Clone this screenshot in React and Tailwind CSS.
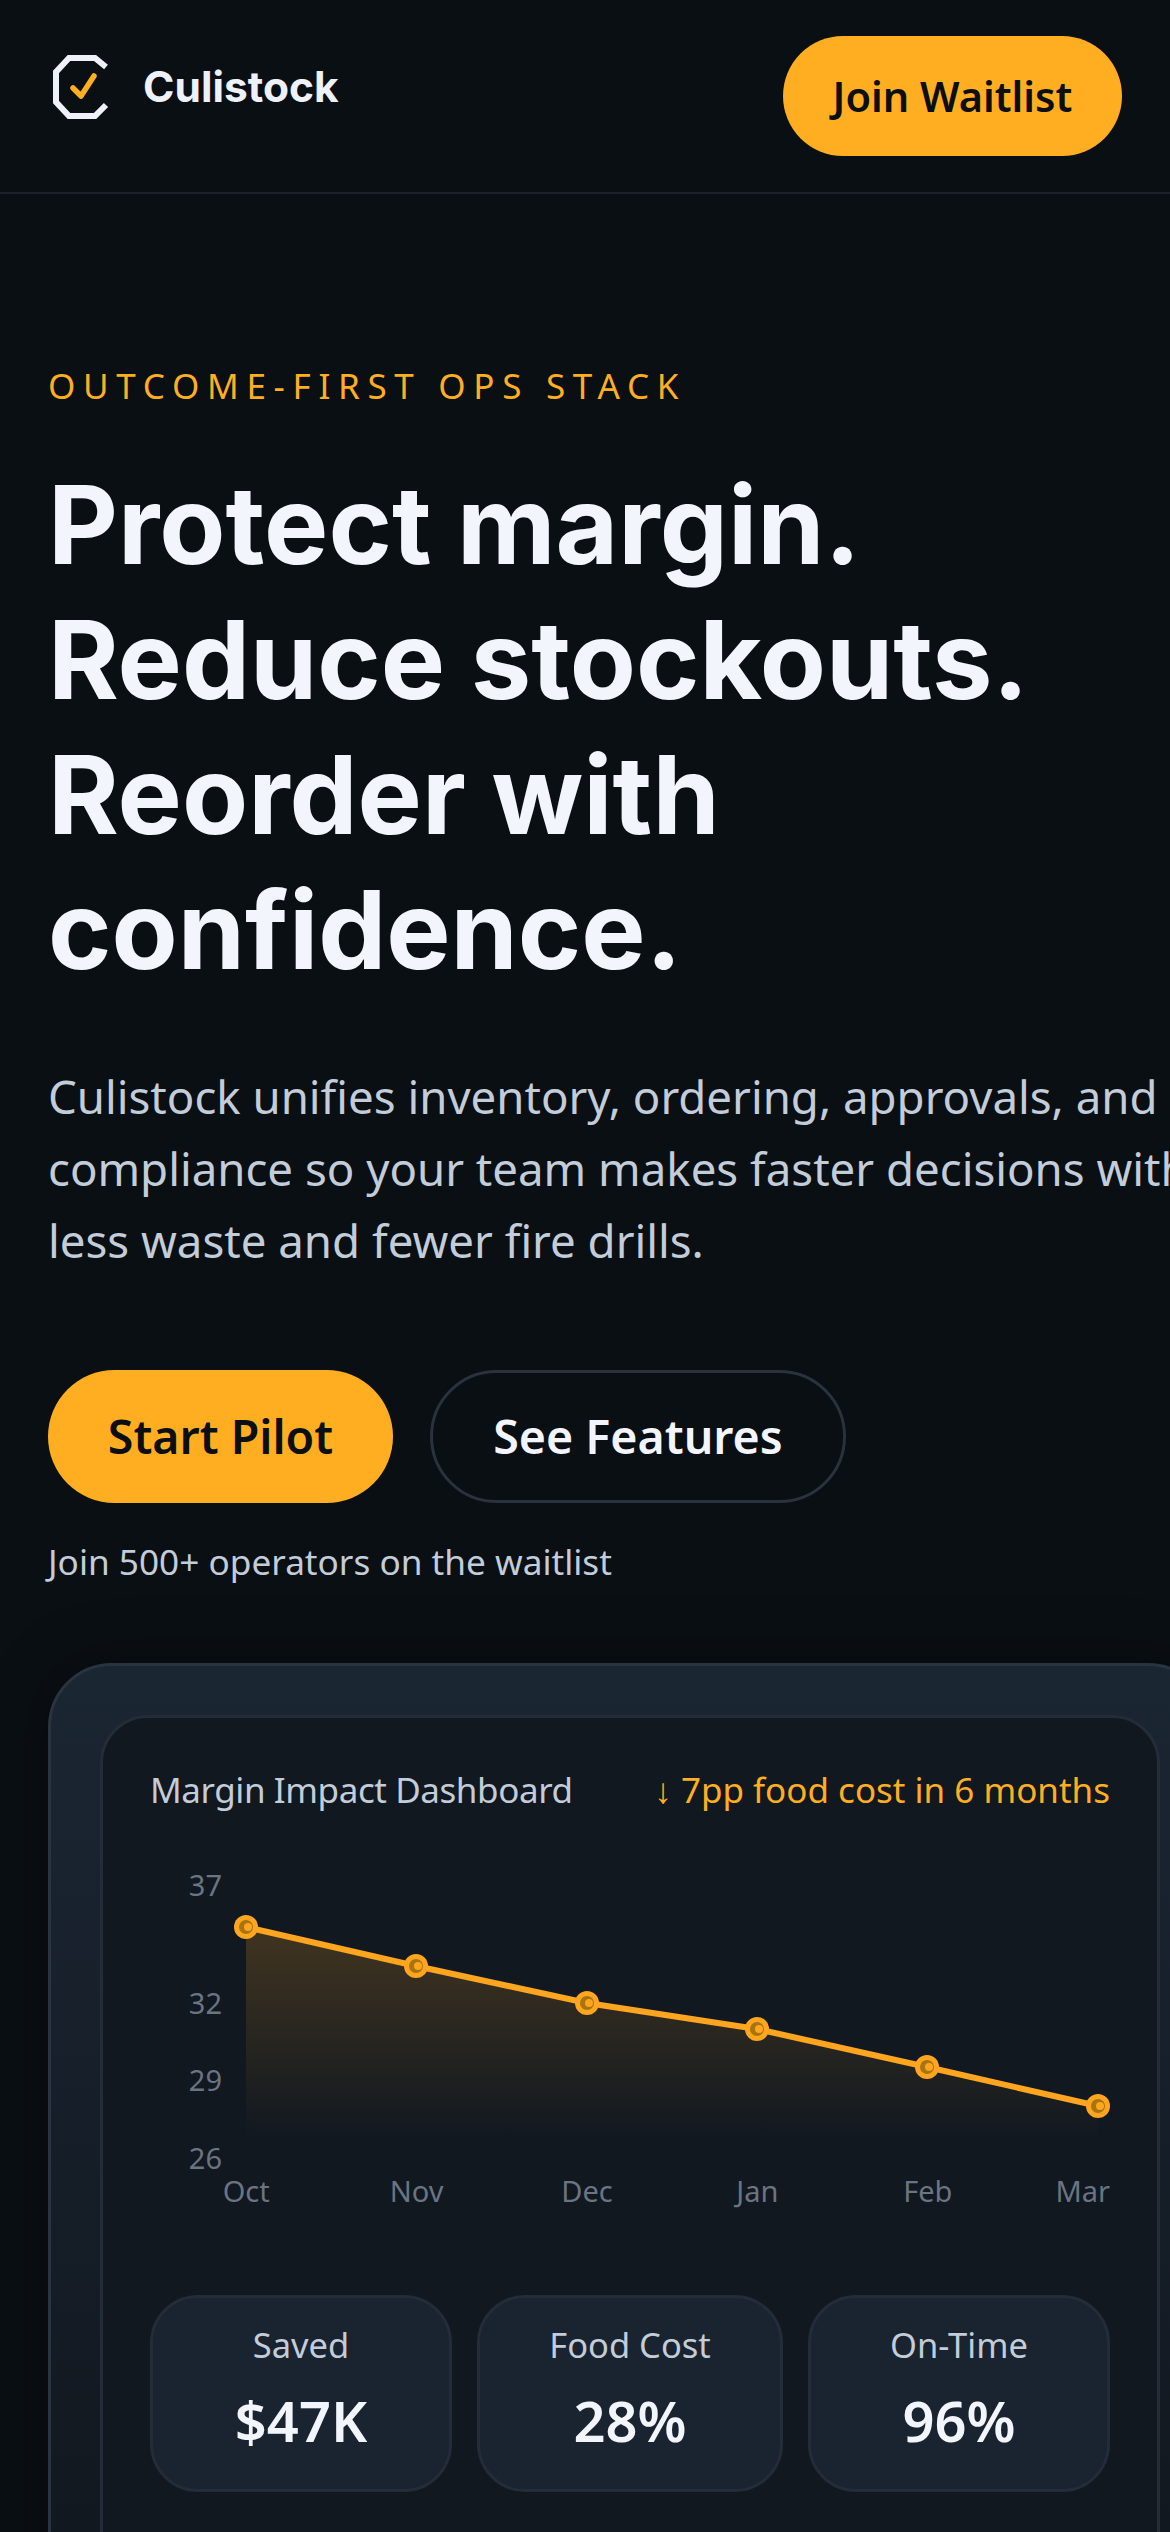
const months = ['Oct', 'Nov', 'Dec', 'Jan', 'Feb'];
const points = [[246, 96], [416, 135], [587, 172], [757, 198], [927, 236], [1098, 275]];
const stats = [
  { label: 'Saved', value: '$47K', width: 'w-[302px]' },
  { label: 'Food Cost', value: '28%', width: 'w-[306px]' },
  { label: 'On-Time', value: '96%', width: 'w-[302px]' },
];

function Logo() {
  return (
    <svg width="64" height="68" viewBox="0 0 64 68" fill="none" className="shrink-0">
      <path d="M58 14 L47 5 L21 5 L8 19 L8 49 L21 63 L47 63 L58 52" stroke="#eef2f8" strokeWidth="6" />
      <path d="M25 35 L33 43 L46 23" stroke="#ffae21" strokeWidth="5.5" strokeLinecap="round" strokeLinejoin="round" />
    </svg>
  );
}

function Chart() {
  const line = points.map((p) => p.join(',')).join(' ');
  return (
    <svg width="1060" height="346" viewBox="100 0 1060 346" className="mt-[16px] block">
      <defs>
        <linearGradient id="areaFill" gradientUnits="userSpaceOnUse" x1="0" y1="96" x2="0" y2="310">
          <stop offset="0%" stopColor="#ffa51f" stopOpacity="0.2" />
          <stop offset="100%" stopColor="#ffa51f" stopOpacity="0" />
        </linearGradient>
      </defs>
      {[['37', 54], ['32', 172], ['29', 249], ['26', 327]].map(([label, y]) => (
        <text key={label} x="222" y={y + 11} textAnchor="end" fontSize="29" fill="#6b7482" fontFamily="'Noto Sans', sans-serif">{label}</text>
      ))}
      <polygon points={`246,96 ${line} 1098,310 246,310`} fill="url(#areaFill)" />
      <polyline points={line} fill="none" stroke="#ffa51f" strokeWidth="6" />
      {points.map(([x, y]) => (
        <g key={x}>
          <circle cx={x} cy={y} r="12" fill="#ffa51f" />
          <circle cx={x} cy={y} r="7" fill="#a8740f" />
          <circle cx={x + 2} cy={y} r="4" fill="#ffa51f" />
        </g>
      ))}
    </svg>
  );
}

export default function App() {
  return (
    <div className="h-[2532px] w-[1170px] overflow-hidden bg-[#0a0f14] font-['Noto_Sans',sans-serif] text-white">
      <div className="w-[1260px]">
        <header className="flex h-[194px] w-[1170px] items-start justify-between border-b-2 border-[#1b2129] pl-[48px] pr-[48px] pt-[36px]">
          <div className="mt-[17px] flex items-center gap-[31px]">
            <Logo />
            <span className="font-['Inter',sans-serif] text-[42.5px] font-bold leading-[52px] text-[#eef2f8]">Culistock</span>
          </div>
          <button className="h-[120px] w-[339px] rounded-full bg-[#ffae21] text-[41.5px] font-semibold text-[#0b0f14]">Join Waitlist</button>
        </header>

        <main className="px-[48px]">
          <p className="mt-[170px] text-[35px] leading-[44px] tracking-[0.22em] text-[#ffae21]">OUTCOME-FIRST OPS STACK</p>
          <h1 className="mt-[49px] font-['Inter',sans-serif] text-[108px] font-bold leading-[135px] text-[#f2f5fb]">
            Protect margin.<br />Reduce stockouts.<br />Reorder with<br />confidence.
          </h1>
          <p className="mt-[63px] text-[45.6px] leading-[72px] text-[#c3ccd9]">
            Culistock unifies inventory, ordering, approvals, and compliance so your team makes faster decisions with less waste and fewer fire drills.
          </p>
          <div className="mt-[94px] flex gap-[37px]">
            <button className="h-[133px] w-[345px] rounded-full bg-[#ffae21] text-[46.5px] font-semibold text-[#0b0f14]">Start Pilot</button>
            <button className="h-[133px] w-[416px] rounded-full border-[3px] border-[#2a323d] text-[46.5px] font-semibold text-[#f2f5fb]">See Features</button>
          </div>
          <p className="mt-[36px] text-[35.2px] leading-[44px] text-[#c3ccd9]">Join 500+ operators on the waitlist</p>

          <section className="mt-[80px] h-[1000px] rounded-[64px] border-[3px] border-[#2a3441] bg-gradient-to-b from-[#1b2633] to-[#10161d] pl-[49px] pt-[49px] shadow-[0_0_60px_rgba(0,0,0,0.35)]">
            <div className="h-[900px] w-[1060px] rounded-[48px] border-[3px] border-[#232c38] bg-[#111820] px-[47px] pt-[47px]">
              <div className="flex items-center justify-between text-[35px] leading-[50px]">
                <span className="tracking-[-0.012em] text-[#c3ccd9]">Margin Impact Dashboard</span>
                <span className="text-[#ffae21]">↓ 7pp food cost in 6 months</span>
              </div>
              <div className="-mx-[50px]">
                <Chart />
              </div>
              <div className="-mt-[6px] flex pl-[11px] text-[29px] leading-[40px] text-[#6b7482]">
                {months.map((m) => <span key={m} className="w-[170.4px] text-center">{m}</span>)}
                <span className="flex-1 text-right">Mar</span>
              </div>
              <div className="mt-[84px] flex justify-between">
                {stats.map((s) => (
                  <div key={s.label} className={`${s.width} h-[197px] rounded-[48px] border-[3px] border-[#232c38] bg-[#1a2430] pt-[24px] text-center`}>
                    <p className="text-[34.5px] leading-[46px] text-[#c3ccd9]">{s.label}</p>
                    <p className="mt-[18px] text-[56px] font-semibold leading-[68px] text-[#f2f5fb]">{s.value}</p>
                  </div>
                ))}
              </div>
            </div>
          </section>
        </main>
      </div>
    </div>
  );
}
